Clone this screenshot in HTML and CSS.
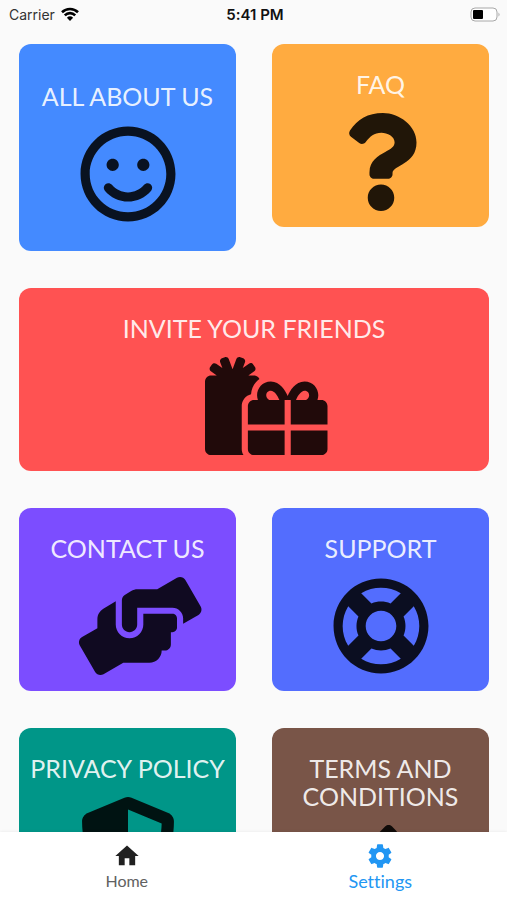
FILE: index.html
```html
<!DOCTYPE html>
<html lang="en">
  <head>
    <meta charset="UTF-8" />
    <meta name="viewport" content="width=device-width, initial-scale=1.0" />
    <title>Settings</title>
    <link rel="stylesheet" href="styles.css">
  </head>
  <body>
    <header class="status-bar">
      <div class="carrier">
        <span>Carrier</span>
        <svg class="wifi" viewBox="0 0 18 14" aria-hidden="true">
          <path d="M9 14 L5.9 10.7 A4.5 4.5 0 0 1 12.1 10.7 Z" />
          <path class="arc" d="M3.8 8.3 A7.4 7.4 0 0 1 14.2 8.3 M1 5.2 A11.5 11.5 0 0 1 17 5.2" />
        </svg>
      </div>
      <span class="time">5:41 PM</span>
      <svg class="battery" viewBox="0 0 31 15" aria-label="Battery 40%">
        <rect class="shell" x="1" y="1" width="26" height="13" rx="4" />
        <rect x="3" y="3" width="10" height="9" rx="1" />
        <path class="tip" d="M28.5 5.5 A2.5 2.5 0 0 1 28.5 9.5 Z" />
      </svg>
    </header>

    <main class="content">
      <div class="card-grid">
        <a href="#about" class="card card-tall blue">
          <span class="card-title">ALL ABOUT US</span>
          <svg class="card-icon" viewBox="0 0 496 512" aria-hidden="true">
            <path d="M248 8C111 8 0 119 0 256s111 248 248 248 248-111 248-248S385 8 248 8zm0 448c-110.3 0-200-89.7-200-200S137.7 56 248 56s200 89.7 200 200-89.7 200-200 200zm-80-216c17.7 0 32-14.3 32-32s-14.3-32-32-32-32 14.3-32 32 14.3 32 32 32zm160 0c17.7 0 32-14.3 32-32s-14.3-32-32-32-32 14.3-32 32 14.3 32 32 32zm4 72.6c-20.8 25-51.5 39.4-84 39.4s-63.2-14.3-84-39.4c-8.5-10.2-23.7-11.5-33.8-3.1-10.2 8.5-11.5 23.6-3.1 33.8 30 36 74.1 56.6 120.9 56.6s90.9-20.6 120.9-56.6c8.5-10.2 7.1-25.3-3.1-33.8-10.1-8.4-25.3-7.1-33.8 3.1z" />
          </svg>
        </a>

        <a href="#faq" class="card orange">
          <span class="card-title">FAQ</span>
          <svg class="card-icon" viewBox="0 0 384 512" aria-hidden="true">
            <path d="M202.021 0C122.202 0 70.503 32.703 29.914 91.026c-7.363 10.58-5.093 25.086 5.178 32.874l43.138 32.709c10.373 7.865 25.132 6.026 33.253-4.148 25.049-31.381 43.63-49.449 82.757-49.449 30.764 0 68.816 19.799 68.816 49.631 0 22.552-18.617 34.134-48.993 51.164-35.423 19.86-82.299 44.576-82.299 106.405V320c0 13.255 10.745 24 24 24h72.471c13.255 0 24-10.745 24-24v-5.773c0-42.86 125.268-44.645 125.268-160.627C377.504 66.256 286.902 0 202.021 0zM192 373.459c-38.196 0-69.271 31.075-69.271 69.271 0 38.195 31.075 69.27 69.271 69.27s69.271-31.075 69.271-69.271-31.075-69.27-69.271-69.27z" />
          </svg>
        </a>

        <a href="#invite" class="card card-wide red">
          <span class="card-title">INVITE YOUR FRIENDS</span>
          <svg class="card-icon" viewBox="0 0 640 512" preserveAspectRatio="xMinYMin slice" aria-hidden="true">
            <path d="M240.6 194.1c1.9-30.8 17.3-61.2 44-79.8C279.4 103.5 268.7 96 256 96h-29.4l30.7-22c7.2-5.1 8.9-15.1 3.7-22.3l-9.3-13c-5.1-7.2-15.1-8.9-22.3-3.7l-32 22.9 11.5-30.6c3.1-8.3-1.1-17.5-9.4-20.6l-15-5.6c-8.3-3.1-17.5 1.1-20.6 9.4l-19.9 53-19.9-53.1C121 2.1 111.8-2.1 103.5 1l-15 5.6C80.2 9.7 76 19 79.2 27.2l11.5 30.6L58.6 35c-7.2-5.1-17.2-3.5-22.3 3.7l-9.3 13c-5.1 7.2-3.5 17.2 3.7 22.3l30.7 22H32c-17.7 0-32 14.3-32 32v352c0 17.7 14.3 32 32 32h168.9c-5.5-9.5-8.9-20.3-8.9-32V256c0-29.9 20.8-55 48.6-61.9zM224 480c0 17.7 14.3 32 32 32h160V384H224v96zm224 32h160c17.7 0 32-14.3 32-32v-96H448v128zm160-288h-20.4c2.6-7.6 4.4-15.5 4.4-23.8 0-35.5-27-72.2-72.1-72.2-48.1 0-75.9 47.7-87.9 75.3-12.1-27.6-39.9-75.3-87.9-75.3-45.1 0-72.1 36.7-72.1 72.2 0 8.3 1.7 16.2 4.4 23.8H256c-17.7 0-32 14.3-32 32v96h192V224h15.3l.7-.2.7.2H448v128h192v-96c0-17.7-14.3-32-32-32zm-272 0c-2.7-1.4-5.1-3-7.2-4.8-7.3-6.4-8.8-13.8-8.8-19 0-9.7 6.4-24.2 24.1-24.2 18.7 0 35.6 27.4 44.5 48H336zm199.2-4.8c-2.1 1.8-4.5 3.4-7.2 4.8h-52.6c8.8-20.3 25.8-48 44.5-48 17.7 0 24.1 14.5 24.1 24.2 0 5.2-1.5 12.6-8.8 19z" />
          </svg>
        </a>

        <a href="#contact" class="card purple">
          <span class="card-title">CONTACT US</span>
          <svg class="card-icon" viewBox="0 0 640 512" preserveAspectRatio="xMinYMin slice" aria-hidden="true">
            <path d="M488 192H336v56c0 39.7-32.3 72-72 72s-72-32.3-72-72V126.4l-64.9 39C107.8 176.9 96 197.8 96 220.2v47.3l-80 46.2C.7 322.5-4.6 342.1 4.3 357.4l80 138.6c8.8 15.3 28.4 20.5 43.7 11.7L231.4 448H368c35.3 0 64-28.7 64-64h16c17.7 0 32-14.3 32-32v-64h8c13.3 0 24-10.7 24-24v-48c0-13.3-10.7-24-24-24zm147.7-37.4L555.7 16C546.9.7 527.3-4.5 512 4.3L408.6 64H306.4c-12 0-23.7 3.4-33.9 9.7L239 94.6c-9.4 5.8-15 16.1-15 27.1V248c0 22.1 17.9 40 40 40s40-17.9 40-40v-88h184c30.9 0 56 25.1 56 56v28.5l80-46.2c15.3-8.9 20.5-28.4 11.7-43.7z" />
          </svg>
        </a>

        <a href="#support" class="card indigo">
          <span class="card-title">SUPPORT</span>
          <svg class="card-icon" viewBox="0 0 512 512" aria-hidden="true">
            <path d="M256 504c136.967 0 248-111.033 248-248S392.967 8 256 8 8 119.033 8 256s111.033 248 248 248zm-103.398-76.72l53.411-53.411c31.806 13.506 68.128 13.522 99.974 0l53.411 53.411c-63.217 38.319-143.579 38.319-206.796 0zM336 256c0 44.112-35.888 80-80 80s-80-35.888-80-80 35.888-80 80-80 80 35.888 80 80zm91.28 103.398l-53.411-53.411c13.505-31.806 13.522-68.128 0-99.974l53.411-53.411c38.319 63.216 38.319 143.578 0 206.796zM359.397 84.72l-53.411 53.411c-31.806-13.505-68.128-13.522-99.973 0L152.602 84.72c63.217-38.319 143.579-38.319 206.795 0zM84.72 152.602l53.411 53.411c-13.506 31.806-13.522 68.128 0 99.974L84.72 359.398c-38.319-63.216-38.319-143.578 0-206.796z" />
          </svg>
        </a>

        <a href="#privacy" class="card teal">
          <span class="card-title">PRIVACY POLICY</span>
          <svg class="card-icon" viewBox="0 0 512 512" aria-hidden="true">
            <path d="M466.5 83.7l-192-80a48.15 48.15 0 0 0-36.9 0l-192 80C27.7 91.1 16 108.6 16 128c0 198.5 114.5 335.7 221.5 380.3 11.8 4.9 25.1 4.9 36.9 0C360.1 472.6 496 349.3 496 128c0-19.4-11.7-36.9-29.5-44.3zM256.1 446.3l-.1-381 175.9 73.3c-3.3 151.4-82.1 261.1-175.8 307.7z" />
          </svg>
        </a>

        <a href="#terms" class="card brown">
          <span class="card-title">TERMS AND CONDITIONS</span>
          <svg class="card-icon" viewBox="0 0 512 512" aria-hidden="true">
            <path d="M504.971 199.362l-22.627-22.627c-9.373-9.373-24.569-9.373-33.941 0l-5.657 5.657L329.608 69.255l5.657-5.657c9.373-9.373 9.373-24.569 0-33.941L312.638 7.029c-9.373-9.373-24.569-9.373-33.941 0L154.246 131.48c-9.373 9.373-9.373 24.569 0 33.941l22.627 22.627c9.373 9.373 24.569 9.373 33.941 0l5.657-5.657 39.598 39.598-81.04 81.04-5.657-5.657c-12.497-12.497-32.758-12.497-45.255 0L9.373 412.118c-12.497 12.497-12.497 32.758 0 45.255l45.255 45.255c12.497 12.497 32.758 12.497 45.255 0l114.745-114.745c12.497-12.497 12.497-32.758 0-45.255l-5.657-5.657 81.04-81.04 39.598 39.598-5.657 5.657c-9.373 9.373-9.373 24.569 0 33.941l22.627 22.627c9.373 9.373 24.569 9.373 33.941 0l124.451-124.451c9.372-9.372 9.372-24.568 0-33.941z" />
          </svg>
        </a>
      </div>
    </main>

    <nav class="bottom-nav">
      <a href="#home" class="nav-item">
        <svg class="nav-icon" viewBox="0 0 24 24" aria-hidden="true">
          <path d="M10 20v-6h4v6h5v-8h3L12 3 2 12h3v8z" />
        </svg>
        <span>Home</span>
      </a>
      <a href="#settings" class="nav-item active" aria-current="page">
        <svg class="nav-icon" viewBox="0 0 24 24" aria-hidden="true">
          <path d="M19.43 12.98c.04-.32.07-.64.07-.98s-.03-.66-.07-.98l2.11-1.65c.19-.15.24-.42.12-.64l-2-3.46c-.12-.22-.39-.3-.61-.22l-2.49 1c-.52-.4-1.08-.73-1.69-.98l-.38-2.65C14.46 2.18 14.25 2 14 2h-4c-.25 0-.46.18-.49.42l-.38 2.65c-.61.25-1.17.59-1.69.98l-2.49-1c-.23-.09-.49 0-.61.22l-2 3.46c-.13.22-.07.49.12.64l2.11 1.65c-.04.32-.07.65-.07.98s.03.66.07.98l-2.11 1.65c-.19.15-.24.42-.12.64l2 3.46c.12.22.39.3.61.22l2.49-1c.52.4 1.08.73 1.69.98l.38 2.65c.03.24.24.42.49.42h4c.25 0 .46-.18.49-.42l.38-2.65c.61-.25 1.17-.59 1.69-.98l2.49 1c.23.09.49 0 .61-.22l2-3.46c.12-.22.07-.49-.12-.64l-2.11-1.65zM12 15.5c-1.93 0-3.5-1.57-3.5-3.5s1.57-3.5 3.5-3.5 3.5 1.57 3.5 3.5-1.57 3.5-3.5 3.5z" />
        </svg>
        <span>Settings</span>
      </a>
    </nav>
  </body>
</html>
```
FILE: styles.css
```css
:root {
  --page-color: #fafafa;
  --active-color: #2196f3;
  --icon-color: rgba(0, 0, 0, 0.87);
}

* {
  box-sizing: border-box;
}

body {
  margin: 0;
  height: 100vh;
  display: flex;
  flex-direction: column;
  background-color: var(--page-color);
  font-family: Lato, sans-serif;
  font-variant-ligatures: none;
}

a {
  color: inherit;
  text-decoration: none;
}

/* Status bar */
.status-bar {
  display: grid;
  grid-template-columns: 1fr auto 1fr;
  align-items: center;
  height: 28px;
  padding: 0 6px 0 9px;
  font-family: Inter, sans-serif;
  font-size: 14px;
  color: #333;
}

.carrier {
  display: flex;
  align-items: center;
  gap: 6px;
}

.time {
  font-size: 15px;
  font-weight: 600;
  color: #111;
}

.wifi {
  width: 18px;
  height: 14px;
}

.wifi .arc {
  fill: none;
  stroke: #000;
  stroke-width: 2.6;
}

.battery {
  justify-self: end;
  width: 31px;
  height: 15px;
}

.battery .shell {
  fill: #fff;
  stroke: #a8a8a8;
}

.battery .tip {
  fill: #a8a8a8;
}

/* Cards */
.content {
  flex: 1;
  min-height: 0;
  overflow-y: auto;
  scrollbar-width: none;
  padding: 16px 18px 36px 19px;
}

.card-grid {
  display: grid;
  grid-template-columns: 1fr 1fr;
  align-items: start;
  gap: 37px 36px;
}

.card {
  display: flex;
  flex-direction: column;
  align-items: center;
  gap: 15px;
  padding: 26px 10px 16px;
  border-radius: 12px;
}

.card-tall {
  padding-top: 38px;
  padding-bottom: 28px;
}

.card-wide {
  grid-column: 1 / -1;
}

.card-title {
  font-size: 25px;
  line-height: 28px;
  text-align: center;
  color: rgba(255, 255, 255, 0.9);
}

/* Square box: glyphs wider than it start at its left edge and run over */
.card-icon {
  width: 98px;
  height: 98px;
  overflow: visible;
  fill: var(--icon-color);
}

.blue {
  background-color: #448aff;
}

.orange {
  background-color: #ffab40;
}

.red {
  background-color: #ff5252;
}

.purple {
  background-color: #7c4dff;
}

.indigo {
  background-color: #536dfe;
}

.teal {
  background-color: #009688;
}

.brown {
  background-color: #795548;
}

/* Bottom navigation */
.bottom-nav {
  display: flex;
  height: 68px;
  background-color: #fff;
  box-shadow: 0 0 3px rgba(0, 0, 0, 0.08);
}

.nav-item {
  flex: 1;
  display: flex;
  flex-direction: column;
  align-items: center;
  padding-top: 10px;
  font-size: 16px;
  line-height: 22px;
  color: #616161;
}

.nav-item.active {
  font-size: 18px;
  color: var(--active-color);
}

.nav-icon {
  width: 28px;
  height: 28px;
  fill: #212121;
}

.active .nav-icon {
  fill: var(--active-color);
}
```
